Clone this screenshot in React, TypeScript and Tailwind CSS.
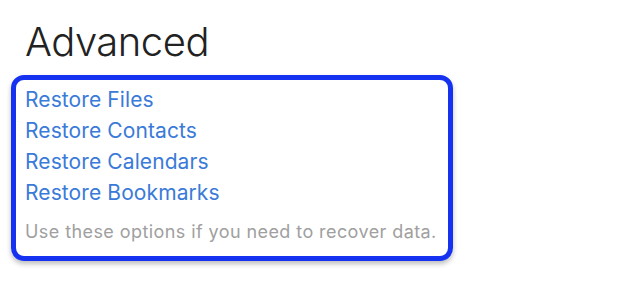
const links = [
  "Restore Files",
  "Restore Contacts",
  "Restore Calendars",
  "Restore Bookmarks",
];

export default function App() {
  return (
    <div className="w-[640px] h-[283px] bg-white font-['Inter','Liberation_Sans',sans-serif] pt-[18px] pl-[11px]">
      <h1 className="pl-[14px] text-[40px] leading-[48px] font-light text-[#222] tracking-[-0.5px]">
        Advanced
      </h1>
      <div className="mt-[9px] w-[442px] rounded-[13px] border-[5px] border-[#1432f0] shadow-[0_3px_5px_rgba(0,0,0,0.25)] pl-[9px] pt-[4px] pb-[12px]">
        <div className="flex flex-col">
          {links.map((l) => (
            <a
              key={l}
              href="#"
              className="text-[21px] leading-[31px] text-[#3a7ad8] tracking-[0.1px]"
            >
              {l}
            </a>
          ))}
        </div>
        <p className="mt-[12px] text-[18px] leading-[24px] text-[#a0a0a0] tracking-[0.42px]">
          Use these options if you need to recover data.
        </p>
      </div>
    </div>
  );
}
